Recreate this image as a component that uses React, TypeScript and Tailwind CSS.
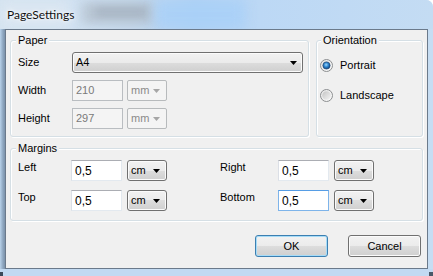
import React from "react";

const btnGrad =
  "bg-[linear-gradient(#f2f2f2_0%,#ebebeb_50%,#dddddd_50%,#cfcfcf_100%)] shadow-[inset_0_0_0_1px_#fbfbfb]";

function Arrow({ color = "#000" }: { color?: string }) {
  return (
    <svg width="7" height="4" viewBox="0 0 7 4" className="block">
      <path d="M0 0H7L3.5 4Z" fill={color} />
    </svg>
  );
}

function Radio({ checked }: { checked?: boolean }) {
  return (
    <svg width="13" height="13" viewBox="0 0 13 13" className="block shrink-0">
      <defs>
        <linearGradient id="rOuter" x1="0" y1="0" x2="1" y2="1">
          <stop offset="0" stopColor="#e6e6e6" />
          <stop offset="1" stopColor="#fbfbfb" />
        </linearGradient>
        <linearGradient id="rInner" x1="0" y1="0" x2="1" y2="1">
          <stop offset="0" stopColor="#c4c4c4" />
          <stop offset="1" stopColor="#f4f4f4" />
        </linearGradient>
        <radialGradient id="rDot" cx="0.45" cy="0.4" r="0.6">
          <stop offset="0" stopColor="#9fd7fa" />
          <stop offset="0.5" stopColor="#2e86d0" />
          <stop offset="1" stopColor="#10447e" />
        </radialGradient>
      </defs>
      <circle cx="6.5" cy="6.5" r="6" fill="url(#rOuter)" stroke="#8c8e90" strokeWidth="1" />
      <circle cx="6.5" cy="6.5" r="4.3" fill="url(#rInner)" />
      {checked && <circle cx="6.5" cy="6.5" r="3.6" fill="url(#rDot)" stroke="#1b3f6e" strokeWidth="0.6" />}
    </svg>
  );
}

function Group({
  label,
  labelLeft,
  className,
  children,
}: {
  label: string;
  labelLeft: string;
  className: string;
  children: React.ReactNode;
}) {
  return (
    <div
      className={`relative rounded-[3px] border border-[#d5dfe5] shadow-[inset_1px_1px_0_#ffffff,1px_1px_0_#ffffff] ${className}`}
    >
      <span
        className={`absolute -top-[7px] ${labelLeft} bg-[#f0f0f0] px-[2px] text-[11px] leading-[13px] text-black`}
      >
        {label}
      </span>
      {children}
    </div>
  );
}

function Unit({ text, disabled }: { text: string; disabled?: boolean }) {
  return disabled ? (
    <div className="ml-[4px] flex h-[21px] w-[40px] items-center justify-between rounded-[2px] border border-[#b7babc] bg-[#f4f4f4] pl-[3px] pr-[6px] text-[11px] text-[#8a8a8a]">
      <span>{text}</span>
      <Arrow color="#a6a6a6" />
    </div>
  ) : (
    <div
      className={`ml-[5px] flex h-[21px] w-[40px] items-center justify-between rounded-[3px] border border-[#707070] ${btnGrad} pl-[3px] pr-[6px] text-[11px] text-black`}
    >
      <span>{text}</span>
      <Arrow />
    </div>
  );
}

function DisabledInput({ value }: { value: string }) {
  return (
    <div className="flex h-[21px] w-[51px] items-center border border-[#b9bdc1] bg-[#f4f4f4] pl-[3px] text-[11px] text-[#7a7a7a]">
      {value}
    </div>
  );
}

function Input({ value, focused }: { value: string; focused?: boolean }) {
  return (
    <div
      className={`flex h-[21px] w-[51px] items-center border bg-white pl-[3px] text-[12px] text-black ${
        focused
          ? "border-[#7eb4ea] border-t-[#569de5]"
          : "border-[#e3e9ef] border-t-[#abadb3] border-l-[#dbdfe6]"
      }`}
    >
      {value}
    </div>
  );
}

export default function App() {
  return (
    <div className="relative flex h-[276px] w-[433px] flex-col overflow-hidden rounded-tr-[7px] bg-[#c4dcf3] font-['Liberation_Sans',Arial,sans-serif]">
      {/* title bar */}
      <div className="relative flex h-[29px] shrink-0 items-center overflow-hidden bg-[linear-gradient(90deg,#d3e2f0_0%,#cfe0f1_18%,#c6daee_30%,#b2d2f3_45%,#bcd8f5_60%,#c4dcf3_100%)] pl-[7px]">
        <div className="absolute left-[82px] top-[2px] h-[22px] w-[72px] bg-[#b3bfcb] opacity-70 blur-[5px]" />
        <div className="absolute left-[95px] top-[7px] h-[10px] w-[52px] bg-[#97a4b3] opacity-50 blur-[4px]" />
        <div className="absolute left-[155px] top-[0px] h-[29px] w-[90px] bg-[#a8d0f8] opacity-80 blur-[6px]" />
        <div className="absolute left-[0px] top-[0px] h-[29px] w-[70px] bg-[#dde8f2] opacity-80 blur-[6px]" />
        <span className="relative font-['Lato','Segoe_UI',sans-serif] text-[12px] text-[#111] [text-shadow:0_0_6px_#fff,0_0_3px_#fff]">
          PageSettings
        </span>
      </div>

      {/* body */}
      <div className="flex h-[240px] shrink-0">
        <div className="w-[5px] shrink-0 bg-[linear-gradient(90deg,#b9d2ea_0%,#8ea6bf_60%,#7d93ab_100%)]" />
        <div className="flex w-[423px] shrink-0 flex-col border border-[#6b7a8b] bg-[#f0f0f0] px-[4px]">
          {/* top row */}
          <div className="mt-[10px] flex gap-[7px]">
            <Group label="Paper" labelLeft="left-[5px]" className="h-[97px] w-[299px]">
              <div className="flex flex-col gap-[7px] pl-[7px] pt-[11px] text-[11px] text-black">
                <div className="flex h-[21px] items-center">
                  <span className="w-[54px]">Size</span>
                  <div
                    className={`flex h-[21px] w-[231px] items-center justify-between rounded-[3px] border border-[#707070] ${btnGrad} pl-[3px] pr-[5px]`}
                  >
                    <span>A4</span>
                    <Arrow />
                  </div>
                </div>
                <div className="flex h-[21px] items-center">
                  <span className="w-[54px]">Width</span>
                  <DisabledInput value="210" />
                  <Unit text="mm" disabled />
                </div>
                <div className="flex h-[21px] items-center">
                  <span className="w-[54px]">Height</span>
                  <DisabledInput value="297" />
                  <Unit text="mm" disabled />
                </div>
              </div>
            </Group>
            <Group label="Orientation" labelLeft="left-[4px]" className="h-[97px] w-[107px]">
              <div className="flex flex-col gap-[17px] pl-[3px] pt-[18px] text-[11px] text-black">
                <div className="flex h-[13px] items-center gap-[7px]">
                  <Radio checked />
                  <span>Portrait</span>
                </div>
                <div className="flex h-[13px] items-center gap-[7px]">
                  <Radio />
                  <span>Landscape</span>
                </div>
              </div>
            </Group>
          </div>

          {/* margins */}
          <Group label="Margins" labelLeft="left-[5px]" className="mt-[11px] h-[73px] w-[413px]">
            <div className="flex flex-col gap-[9px] pl-[7px] pt-[11px] text-[11px] text-black">
              <div className="flex h-[21px] items-start">
                <span className="w-[53px] pt-[1px] leading-[13px]">Left</span>
                <Input value="0,5" />
                <Unit text="cm" />
                <span className="ml-[53px] w-[58px] pt-[1px] leading-[13px]">Right</span>
                <Input value="0,5" />
                <Unit text="cm" />
              </div>
              <div className="flex h-[21px] items-start">
                <span className="w-[53px] pt-[1px] leading-[13px]">Top</span>
                <Input value="0,5" />
                <Unit text="cm" />
                <span className="ml-[53px] w-[58px] pt-[1px] leading-[13px]">Bottom</span>
                <Input value="0,5" focused />
                <Unit text="cm" />
              </div>
            </div>
          </Group>

          {/* buttons */}
          <div className="mt-[14px] flex justify-end gap-[20px] pr-[2px] text-[11px] text-black">
            <button className="flex h-[22px] w-[73px] items-center justify-center rounded-[3px] border border-[#3c7fb1] bg-[linear-gradient(#f2f2f2_0%,#ebebeb_50%,#dddddd_50%,#cfcfcf_100%)] shadow-[inset_0_0_0_1px_#a6dcf8]">
              OK
            </button>
            <button
              className={`flex h-[22px] w-[73px] items-center justify-center rounded-[3px] border border-[#707070] ${btnGrad}`}
            >
              Cancel
            </button>
          </div>
        </div>
        <div className="flex-1 bg-[#c6ddf3]" />
      </div>

      {/* bottom frame */}
      <div className="relative flex-1 bg-[#c2daf2]">
        <div className="absolute bottom-0 left-0 h-[4px] w-[3px] bg-[#3c4a5a]" />
        <div className="absolute bottom-0 right-0 h-[4px] w-[4px] bg-[#4a5868]" />
      </div>
    </div>
  );
}
